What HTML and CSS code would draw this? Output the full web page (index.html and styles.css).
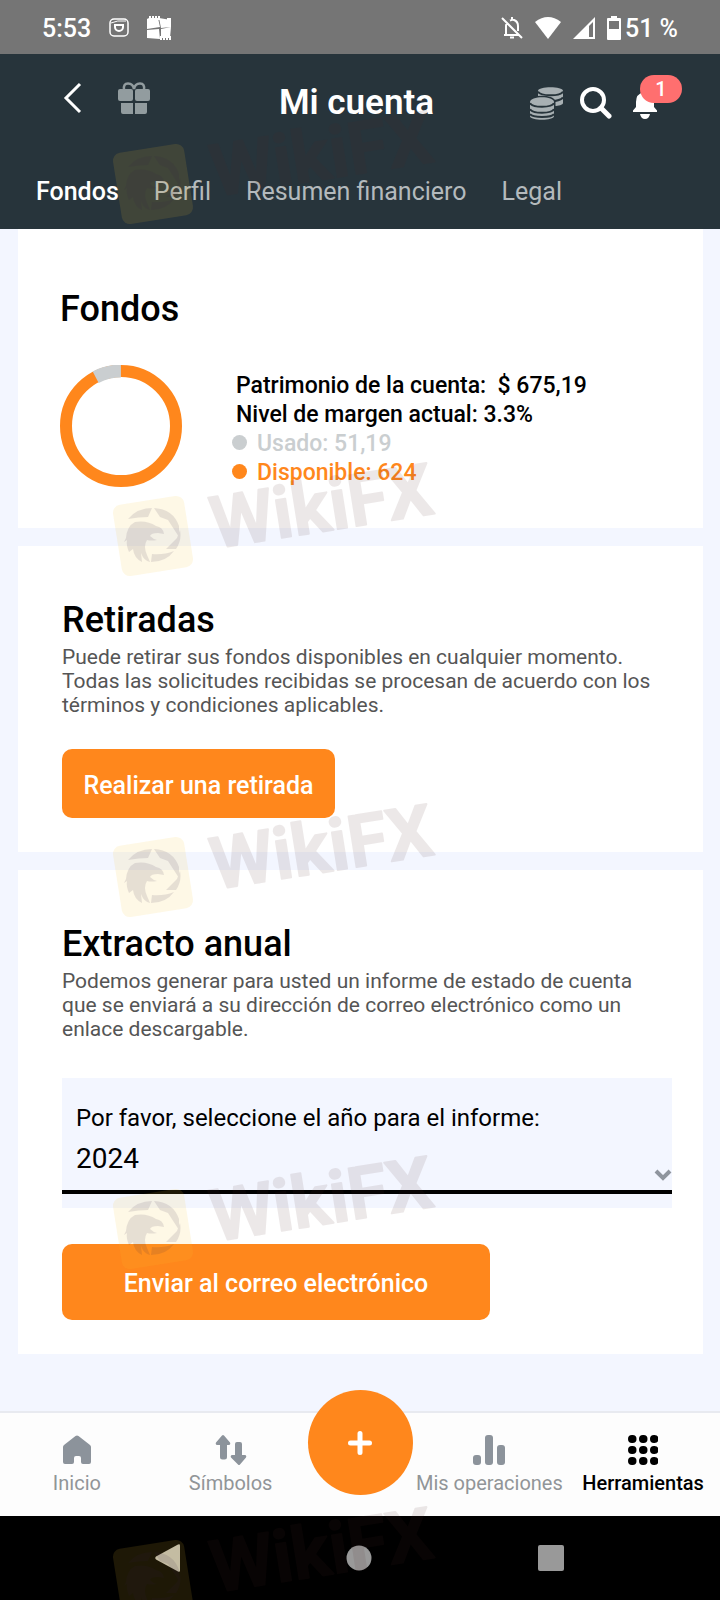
FILE: index.html
```html
<!DOCTYPE html>
<html lang="es">
  <head>
    <meta charset="UTF-8" />
    <meta name="viewport" content="width=device-width, initial-scale=1.0" />
    <title>Mi cuenta</title>
    <link rel="stylesheet" href="styles.css">
  </head>
  <body>
    <div class="status-bar">
      <div class="status-left">
        <span>5:53</span>
        <svg width="20" height="20" viewBox="0 0 20 20" fill="none" stroke="#fff">
          <rect x="1" y="1" width="18" height="17" rx="4" stroke-width="1.5" />
          <path d="M6 7h8v2a4 4 0 0 1-8 0z" stroke-width="2" />
          <path d="M2 5Q8 2 17 3" />
        </svg>
        <svg width="24" height="26" viewBox="0 0 24 26">
          <path d="M2 3h9l2 9-13 2V4zM12 3l12 2v7l-10 1zM0 15l12-1 1 10-13-1zM14 14l10-2-1 11H14z" fill="#fff" />
          <path d="M3 5V1M6 5V1M9 5V1M12 5V1M20 4h4M20 7h4M20 10h4M0 16h4M0 19h4M0 22h4M14 21v4M17 21v4M20 21v4M23 21v4" stroke="#fff" stroke-width="2" />
        </svg>
      </div>
      <div class="status-right">
        <svg width="22" height="24" viewBox="0 0 22 24" fill="none" stroke="#fff" stroke-width="2">
          <path d="M1 2l20 20M3 19h15M5 19V10q0-2 1-3.500M9 4.500Q11 3.500 13 4q4 1.500 4 6v5M9 21.500h4M11 1v3" />
        </svg>
        <svg width="26" height="22" viewBox="0 0 26 22">
          <path d="M0 5Q13-5 26 5L13 22z" fill="#fff" />
        </svg>
        <svg width="22" height="22" viewBox="0 0 22 22">
          <path d="M0 22L22 0v22z" fill="#fff" />
          <path d="M16 9l4-4v15h-4z" fill="#757575" />
        </svg>
        <div class="battery">
          <svg width="14" height="24" viewBox="0 0 14 24">
            <path d="M4 0h6v2h3q1 0 1 1v20q0 1-1 1H1q-1 0-1-1V3q0-1 1-1h3z" fill="#fff" />
            <path d="M2 5h10v8H2z" fill="#757575" />
          </svg>
          <span>51 %</span>
        </div>
      </div>
    </div>

    <header class="header">
      <div class="title-row">
        <div class="actions">
          <button class="icon-btn" aria-label="Volver">
            <svg width="28" height="32" viewBox="0 0 28 32" fill="none" stroke="#fff" stroke-width="3">
              <path d="M24 2L10 16l14 14" />
            </svg>
          </button>
          <button class="icon-btn gift" aria-label="Regalos">
            <svg width="32" height="32" viewBox="0 0 32 32" fill="#929c9f">
              <rect y="7" width="15" height="12" rx="2" />
              <rect x="17" y="7" width="15" height="12" rx="2" />
              <path d="M3 21h12v11H5q-2 0-2-2zM17 21h12v9q0 2-2 2H17z" />
              <path d="M6 8Q5 1.500 10 1.500T16 7Q17 1.500 22 1.500T26 8" fill="none" stroke="#929c9f" stroke-width="2.500" />
            </svg>
          </button>
        </div>
        <h1>Mi cuenta</h1>
        <div class="actions actions-right">
          <button class="icon-btn" aria-label="Monedas">
            <svg width="33" height="33" viewBox="0 0 33 33" fill="#a8b0b3">
              <path d="M8 4C8-1 33-1 33 4v12c0 2-5 3-8 3L8 10z" />
              <path d="M8 4.500c2 5 23 5 25 0M22 14q8 0 11-3.500" fill="none" stroke="#27343b" stroke-width="2" />
              <path d="M0 15c0-6.500 24-6.500 24 0v14c0 5-24 5-24 0z" stroke="#27343b" stroke-width="3" paint-order="stroke" />
              <path d="M0 16c2 5 22 5 24 0M0 22c2 5 22 5 24 0M0 27c2 4 22 4 24 0" fill="none" stroke="#27343b" stroke-width="2" />
            </svg>
          </button>
          <button class="icon-btn" aria-label="Buscar">
            <svg width="32" height="32" viewBox="0 0 32 32" fill="none" stroke="#fff">
              <circle cx="13" cy="13" r="11" stroke-width="4" />
              <path d="M21 21l8 8" stroke-width="5" stroke-linecap="round" />
            </svg>
          </button>
          <button class="icon-btn bell" aria-label="Notificaciones">
            <svg width="24" height="32" viewBox="0 0 24 32" fill="#fff">
              <path d="M12 3q1.500 0 1.500 2Q21 7 21 15v5l3 3.500V25H0v-1.500L3 20v-5Q3 7 10.500 5q0-2 1.500-2zM7 27h10q-1 5-5 5t-5-5z" />
            </svg>
            <span class="badge">1</span>
          </button>
        </div>
      </div>
      <nav class="tabs">
        <a class="active" href="#">Fondos</a>
        <a href="#">Perfil</a>
        <a href="#">Resumen financiero</a>
        <a href="#">Legal</a>
      </nav>
    </header>

    <main class="content">
      <section class="card funds">
        <h2>Fondos</h2>
        <div class="funds-row">
          <svg class="donut" width="122" height="122" viewBox="0 0 122 122" fill="none" stroke-width="12">
            <circle cx="61" cy="61" r="55" stroke="#ff871c" />
            <circle cx="61" cy="61" r="55" stroke="#caced0" stroke-width="13" pathLength="100" stroke-dasharray="7.6 92.4" transform="rotate(-117.400 61 61)" />
          </svg>
          <ul class="legend">
            <li>Patrimonio de la cuenta:&nbsp; $ 675,19</li>
            <li>Nivel de margen actual: 3.3%</li>
            <li class="used">Usado: 51,19</li>
            <li class="available">Disponible: 624</li>
          </ul>
        </div>
      </section>

      <section class="card">
        <h2>Retiradas</h2>
        <p>Puede retirar sus fondos disponibles en cualquier momento. Todas las solicitudes recibidas se procesan de acuerdo con los términos y condiciones aplicables.</p>
        <button class="btn btn-withdraw">Realizar una retirada</button>
      </section>

      <section class="card">
        <h2>Extracto anual</h2>
        <p>Podemos generar para usted un informe de estado de cuenta que se enviará a su dirección de correo electrónico como un enlace descargable.</p>
        <div class="field">
          <label for="year">Por favor, seleccione el año para el informe:</label>
          <div class="select-wrap">
            <select id="year">
              <option>2024</option>
            </select>
            <svg width="18" height="12" viewBox="0 0 18 12" fill="none" stroke="#8f959e" stroke-width="4">
              <path d="M2 2l7 7 7-7" />
            </svg>
          </div>
        </div>
        <button class="btn btn-email">Enviar al correo electrónico</button>
      </section>
    </main>

    <nav class="bottom-nav">
      <a href="#">
        <svg width="28" height="30" viewBox="0 0 28 30" fill="#8c939b">
          <path d="M12.500 1q1.500-1 3 0L27 10q1 1 1 2v15q0 2-2 2h-6q-2 0-2-2v-4q0-2-2-2h-3q-2 0-2 2v4q0 2-2 2H2q-2 0-2-2V12q0-1 1-2z" />
        </svg>
        Inicio
      </a>
      <a href="#">
        <svg width="32" height="30" viewBox="0 0 32 30" fill="#8c939b">
          <path d="M7 .5q1-1 2 0L15 7.500q1 2.500-1.500 2.500H12v12q0 2.500-2.500 2.500h-2Q5 24.500 5 22V10H2.500Q0 10 1 7.500zM23 29.500q1 1 2 0l6-7q1-2.500-1.500-2.500H27V9q0-2-2-2h-3q-2 0-2 2v11h-2.500q-2.500 0-1.500 2.500z" />
        </svg>
        Símbolos
      </a>
      <button class="fab" aria-label="Nueva operación">
        <svg width="24" height="24" viewBox="0 0 24 24" stroke="#fff" stroke-width="5" stroke-linecap="round">
          <path d="M12 2.500v19M2.500 12h19" />
        </svg>
      </button>
      <a href="#">
        <svg width="32" height="30" viewBox="0 0 32 30" fill="#8c939b">
          <rect y="20" width="8" height="10" rx="3" />
          <rect x="12" width="8" height="30" rx="3" />
          <rect x="24" y="10" width="8" height="20" rx="3" />
        </svg>
        Mis operaciones
      </a>
      <a class="active" href="#">
        <svg width="30" height="30" viewBox="0 0 30 30" stroke="#000" stroke-width="8" stroke-linecap="round">
          <path d="M4 4h.5M15 4h.5M26 4h.5M4 15h.5M15 15h.5M26 15h.5M4 26h.5M15 26h.5M26 26h.5" />
        </svg>
        Herramientas
      </a>
    </nav>

    <div class="system-nav">
      <svg width="26" height="28" viewBox="0 0 26 28"><path d="M1 12.500L23 .5q2-1 2 1v25q0 2-2 1L1 15.500q-1.500-1.500 0-3z" fill="#bdbbb2" /></svg>
      <svg width="26" height="26" viewBox="0 0 26 26"><circle cx="13" cy="13" r="12.500" fill="#999" /></svg>
      <svg width="28" height="28" viewBox="0 0 28 28"><rect x="1" y="1" width="26" height="26" rx="2" fill="#999" /></svg>
    </div>

    <svg class="watermark" aria-hidden="true">
      <defs>
        <g id="eagle">
          <rect x="-36" y="-36" width="72" height="72" rx="8" class="wm-box" />
          <g class="wm-ink" transform="rotate(9)">
            <path d="M-25-17Q-16-28-1-28L-5-19Q-14-19-25-17zM1-28Q20-27 26-10V1L15-16 7-19zM24 2L27-6Q29 4 23 13H13zM21 15Q13 26-2 26L-1 18Q11 19 21 15z" />
            <path d="M-27 2Q-26-10-18-14-6-16 3-10 10-9 11-2L5-3Q-2-3-3 0 0 3 4 4-2 5-6 4-10 10-6 19L-3 26Q-9 25-12 17L-11 26Q-19 22-20 13L-24 16Q-27 9-26 4L-29 6z" />
          </g>
        </g>
      </defs>
      <g transform="translate(153 184) rotate(-9)">
        <use href="#eagle" />
        <text x="59" y="22">WikiFX</text>
      </g>
      <g transform="translate(153 536) rotate(-9)">
        <use href="#eagle" />
        <text x="59" y="22">WikiFX</text>
      </g>
      <g transform="translate(153 877) rotate(-9)">
        <use href="#eagle" />
        <text x="59" y="22">WikiFX</text>
      </g>
      <g transform="translate(153 1229) rotate(-9)">
        <use href="#eagle" />
        <text x="59" y="22">WikiFX</text>
      </g>
      <g transform="translate(153 1580) rotate(-9)">
        <use href="#eagle" />
        <text x="59" y="22">WikiFX</text>
      </g>
    </svg>
  </body>
</html>
```

FILE: styles.css
```css
* {
  box-sizing: border-box;
}
body {
  position: relative;
  display: flex;
  flex-direction: column;
  min-height: 100vh;
  margin: 0;
  font-family: Roboto, sans-serif;
  color: #000;
  background-color: #f3f6ff;
}
h1,
h2,
p,
ul {
  margin: 0;
  padding: 0;
}
svg {
  display: block;
  flex-shrink: 0;
}
a {
  text-decoration: none;
}
button,
select {
  font-family: inherit;
  border: none;
  cursor: pointer;
}

/* status bar */
.status-bar {
  display: flex;
  justify-content: space-between;
  align-items: center;
  height: 54px;
  padding: 2px 42px 0;
  font-size: 25px;
  font-weight: 500;
  color: #fff;
  background-color: #757575;
}
.status-left,
.status-right {
  display: flex;
  align-items: center;
}
.status-left {
  gap: 18px;
}
.status-right {
  gap: 12px;
}
.battery {
  display: flex;
  align-items: center;
  gap: 4px;
}

/* header */
.header {
  height: 175px;
  padding-top: 25px;
  color: #fff;
  background-color: #27343b;
}
.title-row {
  display: grid;
  grid-template-columns: 1fr auto 1fr;
  align-items: center;
  height: 48px;
  padding: 0 63px 0 56px;
}
.title-row h1 {
  font-size: 35px;
  font-weight: 600;
  line-height: 46px;
}
.actions {
  display: flex;
  align-items: center;
  padding-bottom: 10px;
}
.actions-right {
  justify-content: flex-end;
  gap: 17px;
  padding-bottom: 0;
}
.icon-btn {
  position: relative;
  padding: 0;
  background: none;
}
.gift {
  margin-left: 34px;
}
.bell {
  margin-left: 4px;
}
.badge {
  position: absolute;
  top: -12px;
  left: 7px;
  width: 42px;
  border-radius: 14px;
  font-size: 20px;
  font-weight: 500;
  line-height: 28px;
  text-align: center;
  color: #fff;
  background-color: #ff6f6f;
}
.tabs {
  display: flex;
  gap: 35px;
  padding: 50px 36px 0;
  font-size: 25px;
  line-height: 30px;
}
.tabs a {
  color: #b4babd;
}
.tabs .active {
  font-weight: 500;
  color: #fff;
}

/* cards */
.content {
  display: flex;
  flex-direction: column;
  gap: 18px;
  padding: 0 17px 56px 18px;
}
.card {
  padding: 54px 31px 34px 44px;
  background-color: #fff;
}
.card h2 {
  font-size: 36px;
  font-weight: 500;
  line-height: 40px;
}
.card p {
  margin-top: 5px;
  padding-right: 20px;
  font-size: 21px;
  line-height: 24px;
  color: #555;
}
.funds {
  padding: 60px 42px 41px;
}
.funds-row {
  display: flex;
  align-items: flex-end;
  gap: 50px;
  margin-top: 36px;
}
.legend {
  list-style: none;
  font-size: 23px;
  font-weight: 500;
  line-height: 29px;
}
.legend li {
  padding-left: 4px;
}
.legend .used,
.legend .available {
  display: flex;
  align-items: center;
  gap: 10px;
  padding-left: 0;
}
.used::before,
.available::before {
  content: "";
  width: 15px;
  height: 15px;
  margin-bottom: 3px;
  border-radius: 50%;
  background-color: currentColor;
}
.used {
  color: #caced0;
}
.available {
  color: #ff871c;
}
.btn {
  display: block;
  border-radius: 10px;
  padding: 3px 0 0;
  font-size: 25px;
  font-weight: 500;
  color: #fff;
  background-color: #ff871c;
}
.btn-withdraw {
  width: 273px;
  height: 69px;
  margin-top: 32px;
}
.btn-email {
  width: 428px;
  height: 76px;
  margin-top: 36px;
}
.field {
  margin-top: 37px;
  padding: 26px 0 14px;
  background-color: #f3f6ff;
}
.field label {
  display: block;
  padding: 0 14px;
  font-size: 24px;
  line-height: 28px;
}
.select-wrap {
  display: grid;
}
.select-wrap select,
.select-wrap svg {
  grid-area: 1 / 1;
}
.select-wrap select {
  appearance: none;
  width: 100%;
  height: 62px;
  padding: 0 14px 6px;
  border-bottom: 4px solid #000;
  border-radius: 0;
  font-size: 28px;
  color: #000;
  background: none;
}
.select-wrap svg {
  align-self: end;
  justify-self: end;
  margin-bottom: 13px;
  pointer-events: none;
}

/* bottom navigation */
.bottom-nav {
  display: grid;
  grid-template-columns: 3fr 3fr 2fr 3fr 3fr;
  height: 105px;
  margin-top: auto;
  border-top: 2px solid #e8eaf0;
  background-color: #fdfdfd;
}
.bottom-nav a {
  display: flex;
  flex-direction: column;
  align-items: center;
  gap: 5px;
  min-width: 0;
  padding-top: 22px;
  font-size: 20px;
  line-height: 26px;
  white-space: nowrap;
  color: #919598;
}
.bottom-nav .active {
  font-weight: 500;
  color: #000;
}
.fab {
  display: flex;
  justify-content: center;
  align-items: center;
  justify-self: center;
  width: 105px;
  height: 105px;
  margin-top: -23px;
  border-radius: 50%;
  background-color: #ff871c;
}
.system-nav {
  display: flex;
  justify-content: space-between;
  align-items: center;
  height: 84px;
  padding: 0 155px;
  background-color: #000;
}

/* watermark over the whole page */
.watermark {
  position: absolute;
  inset: 0;
  width: 100%;
  height: 100%;
  overflow: hidden;
  pointer-events: none;
}
.watermark text {
  font-size: 72px;
  font-weight: 600;
  fill: #502828;
  stroke: #502828;
  stroke-width: 2px;
  stroke-linejoin: round;
  opacity: 0.1;
}
.wm-box {
  fill: #f5c832;
  opacity: 0.12;
}
.wm-ink {
  fill: #321e46;
  opacity: 0.11;
}
```
